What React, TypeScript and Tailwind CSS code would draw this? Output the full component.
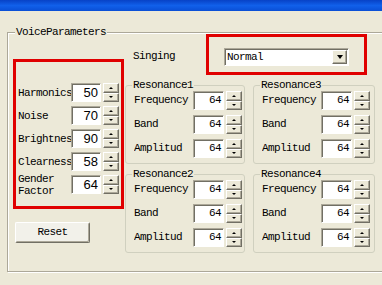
import React from "react";

const mono = "[font-family:'Liberation_Mono',monospace] text-[11px] tracking-[-0.6px] text-black";

function SpinBtn({ up }: { up?: boolean }) {
  return (
    <div className="flex flex-1 items-center justify-center border border-t-white border-l-white border-r-[#716f64] border-b-[#716f64] bg-[#ece9d8] shadow-[inset_-1px_-1px_0_#aca899]">
      {up ? (
        <div className="h-0 w-0 border-x-[2px] border-b-[2px] border-x-transparent border-b-black" />
      ) : (
        <div className="h-0 w-0 border-x-[2px] border-t-[2px] border-x-transparent border-t-black" />
      )}
    </div>
  );
}

function Spin() {
  return (
    <div className="ml-[2px] flex h-[19px] w-[16px] flex-col">
      <SpinBtn up />
      <SpinBtn />
    </div>
  );
}

function Edit({ value, big, w }: { value: string; big?: boolean; w: string }) {
  return (
    <div
      className={`flex h-[19px] ${w} items-center justify-end border border-t-[#aca899] border-l-[#aca899] border-b-white border-r-white bg-white pr-[2px] shadow-[inset_1px_1px_0_#716f64] ${
        big ? "[font-family:'Liberation_Sans',Arial,sans-serif] text-[13px] tracking-normal text-black" : mono
      }`}
    >
      {value}
    </div>
  );
}

function LeftRow({ label, value }: { label: React.ReactNode; value: string }) {
  return (
    <div className="flex h-[19px] items-center">
      <div className="w-[53px] overflow-hidden whitespace-nowrap leading-[12px]">{label}</div>
      <Edit value={value} big w="w-[30px]" />
      <Spin />
    </div>
  );
}

function Resonance({ title, wide }: { title: string; wide?: boolean }) {
  const rows = ["Frequency", "Band", "Amplitud"];
  return (
    <div className={`relative h-[79px] rounded-[3px] border border-[#d0d0bf] ${wide ? "w-[122px]" : "w-[120px]"}`}>
      <span className="absolute -top-[7px] left-[6px] bg-[#ece9d8] px-[1px] leading-[12px]">{title}</span>
      <div className="flex flex-col gap-[5px] pl-[8px] pt-[5px]">
        {rows.map((r) => (
          <div key={r} className="flex h-[19px] items-center">
            <div className="w-[59px] overflow-hidden whitespace-nowrap">{r}</div>
            <Edit value="64" w="w-[31px]" />
            <Spin />
          </div>
        ))}
      </div>
    </div>
  );
}

export default function App() {
  return (
    <div className={`flex h-[285px] w-[382px] flex-col overflow-hidden bg-[#ece9d8] ${mono}`}>
      {/* title bar remnant */}
      <div className="h-[11px] w-full shrink-0 bg-gradient-to-b from-[#0842c6] via-[#1160ea] to-[#0a4fd6]" />

      <div className="relative ml-[7px] mt-[21px] h-[240px] w-[385px] shrink-0 border border-[#aca899] shadow-[1px_1px_0_#fff,inset_1px_1px_0_#fff]">
        <span className="absolute -top-[7px] left-[7px] bg-[#ece9d8] px-[1px] leading-[12px]">VoiceParameters</span>

        <div className="flex">
          {/* left column */}
          <div className="ml-[5px] flex flex-col">
            <div className="mt-[26px] flex h-[150px] w-[111px] flex-col gap-[4px] border-[3px] border-[#e00000] pl-[2px] pt-[21px]">
              <LeftRow label="Harmonics" value="50" />
              <LeftRow label="Noise" value="70" />
              <LeftRow label="Brightness" value="90" />
              <LeftRow label="Clearness" value="58" />
              <LeftRow
                label={
                  <span className="whitespace-normal">
                    Gender
                    <br />
                    Factor
                  </span>
                }
                value="64"
              />
            </div>
            <button className="ml-[2px] mt-[13px] flex h-[21px] w-[75px] items-center justify-center rounded-[2px] border border-t-white border-l-white border-r-[#716f64] border-b-[#716f64] bg-[#f2f1ea] shadow-[inset_-1px_-1px_0_#aca899]">
              Reset
            </button>
          </div>

          {/* right column */}
          <div className="ml-[1px] flex flex-col">
            <div className="mt-[1px] flex items-center">
              <div className="mt-[4px] w-[81px] pl-[8px]">Singing</div>
              <div className="h-[41px] w-[161px] border-[3px] border-[#e00000] pl-[15px] pt-[11px]">
                <div className="flex h-[18px] w-[125px] items-center border border-t-[#aca899] border-l-[#aca899] border-b-white border-r-white bg-white pl-[2px] pr-[1px] shadow-[inset_1px_1px_0_#716f64]">
                  <span className="flex-1">Normal</span>
                  <div className="flex h-[14px] w-[15px] items-center justify-center border border-t-white border-l-white border-r-[#716f64] border-b-[#716f64] bg-[#ece9d8] shadow-[inset_-1px_-1px_0_#aca899]">
                    <div className="h-0 w-0 border-x-[3.5px] border-t-[4px] border-x-transparent border-t-black" />
                  </div>
                </div>
              </div>
            </div>

            <div className="mt-[10px] grid grid-cols-[120px_122px] gap-x-[8px] gap-y-[10px]">
              <Resonance title="Resonance1" />
              <Resonance title="Resonance3" wide />
              <Resonance title="Resonance2" />
              <Resonance title="Resonance4" wide />
            </div>
          </div>
        </div>
      </div>
    </div>
  );
}
